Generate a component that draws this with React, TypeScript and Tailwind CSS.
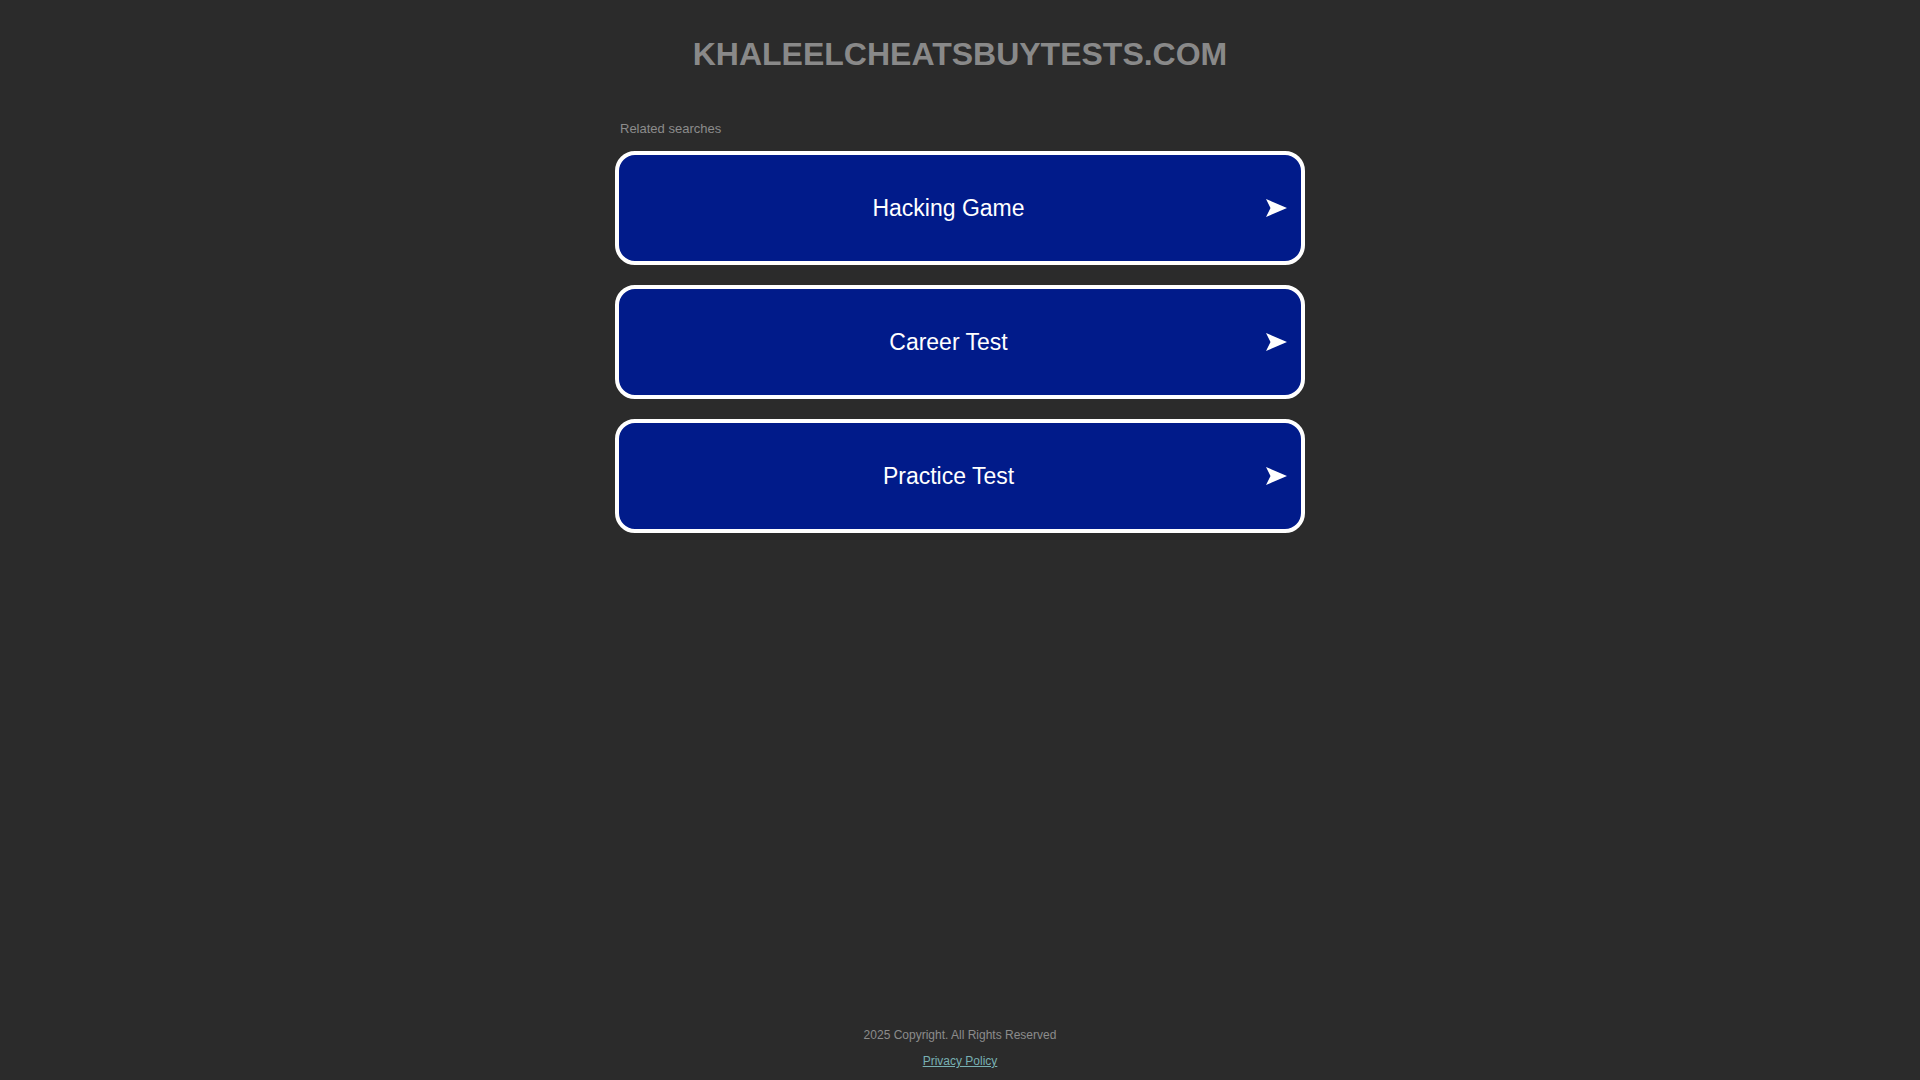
const searches = ["Hacking Game", "Career Test", "Practice Test"];

function Arrow() {
  return (
    <svg
      width="21"
      height="18"
      viewBox="0 0 21 18"
      className="absolute right-[14px] top-1/2 -translate-y-1/2"
    >
      <path d="M0 0 L21 9 L0 18 L4.5 9 Z" fill="#ffffff" />
    </svg>
  );
}

export default function App() {
  return (
    <div
      className="flex h-screen flex-col items-center bg-[#2b2b2b]"
      style={{ fontFamily: '"Liberation Sans", Arial, sans-serif' }}
    >
      <h1 className="pt-[36px] text-[32px] leading-[36px] font-bold text-[#898989]">
        KHALEELCHEATSBUYTESTS.COM
      </h1>

      <div className="mt-[49px] w-[690px]">
        <div className="px-[5px] text-[13px] leading-[15px] text-[#8c8c8c]">
          Related searches
        </div>
        <div className="mt-[15px] flex flex-col gap-[20px]">
          {searches.map((item) => (
            <div
              key={item}
              className="relative flex h-[114px] cursor-pointer items-center justify-center rounded-[20px] border-4 border-white bg-[#011b8a] pt-[1px] pr-[23px] text-[23px] text-white"
            >
              {item}
              <Arrow />
            </div>
          ))}
        </div>
      </div>

      <footer className="mt-auto flex flex-col items-center gap-[12px] pb-[12px] text-[12px] leading-[14px]">
        <span className="text-[#8c8c8c]">2025 Copyright. All Rights Reserved</span>
        <a className="text-[#78b0b3] underline cursor-pointer">Privacy Policy</a>
      </footer>
    </div>
  );
}
